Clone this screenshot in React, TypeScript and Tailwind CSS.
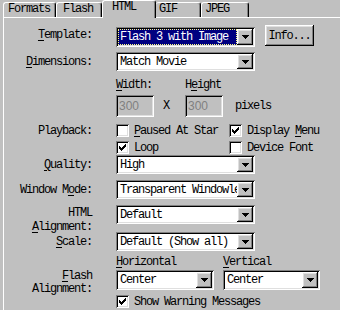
import React from 'react';

const sunken =
  'shadow-[inset_1px_1px_0_#808080,inset_-1px_-1px_0_#ffffff,inset_2px_2px_0_#000000,inset_-2px_-2px_0_#dfdfdf]';
const raised =
  'shadow-[inset_-1px_-1px_0_#000000,inset_1px_1px_0_#ffffff,inset_-2px_-2px_0_#808080,inset_2px_2px_0_#dfdfdf]';

const U = ({ children }: { children: React.ReactNode }) => (
  <span className="underline underline-offset-[2px] decoration-1">{children}</span>
);

const Arrow = () => (
  <svg width="7" height="4" viewBox="0 0 7 4" shapeRendering="crispEdges">
    <path d="M0 0h7v1h-1v1h-1v1h-1v1h-1v-1h-1v-1h-1v-1h-1z" fill="#000" />
  </svg>
);

interface ComboProps {
  value: string;
  w: string;
  h?: string;
  focused?: boolean;
}

const Combo = ({ value, w, h = 'h-[19px]', focused }: ComboProps) => (
  <div className={`${w} ${h} bg-white ${sunken} flex p-[2px] shrink-0`}>
    <div className="flex-1 min-w-0 overflow-hidden whitespace-nowrap flex items-stretch">
      {focused ? (
        <div className="flex-1 bg-[#000080] text-white border border-dotted border-[#ffff80] flex items-center pl-[1px]">
          {value}
        </div>
      ) : (
        <div className="flex items-center pl-[2px]">{value}</div>
      )}
    </div>
    <div className={`w-[16px] shrink-0 bg-[#c0c0c0] ${raised} flex items-center justify-center`}>
      <Arrow />
    </div>
  </div>
);

const Check = ({ checked }: { checked?: boolean }) => (
  <div className={`w-[13px] h-[13px] shrink-0 bg-white ${sunken} flex items-center justify-center`}>
    {checked && (
      <svg width="7" height="7" viewBox="0 0 7 7" shapeRendering="crispEdges">
        <path
          d="M0 2h1v3h-1zM1 3h1v3h-1zM2 4h1v3h-1zM3 3h1v3h-1zM4 2h1v3h-1zM5 1h1v3h-1zM6 0h1v3h-1z"
          fill="#000"
        />
      </svg>
    )}
  </div>
);

const Label = ({ children }: { children: React.ReactNode }) => (
  <div className="w-[88px] shrink-0 text-right whitespace-nowrap mr-[24px]">{children}</div>
);

const NumBox = ({ value }: { value: string }) => (
  <div
    className={`w-[38px] h-[22px] shrink-0 bg-[#c0c0c0] ${sunken} flex items-center pl-[3px] font-['Liberation_Sans',sans-serif] text-[12px] tracking-normal text-[#808080]`}
  >
    {value}
  </div>
);

export default function App() {
  return (
    <div className="w-[340px] h-[310px] overflow-hidden bg-[#c0c0c0] text-black font-['Liberation_Mono',monospace] text-[12px] tracking-[-1.2px] leading-[12px] flex flex-col">
      {/* tabs */}
      <div className="h-[17px] flex items-end shrink-0 pl-[3px]">
        <div className="w-[53px] h-[15px] border-t border-l border-white border-r border-r-black shadow-[inset_-1px_0_0_#808080] rounded-t-[3px] pl-[4px]">
          Formats
        </div>
        <div className="w-[46px] h-[15px] border-t border-l border-white border-r border-r-black shadow-[inset_-1px_0_0_#808080] rounded-t-[3px] pl-[6px]">
          Flash
        </div>
        <div className="relative z-10 w-[54px] h-[18px] -mb-px bg-[#c0c0c0] border-t border-l border-white border-r border-r-black shadow-[inset_-1px_0_0_#808080] rounded-t-[3px] pl-[9px]">
          HTML
        </div>
        <div className="w-[45px] h-[15px] border-t border-white border-r border-r-black shadow-[inset_-1px_0_0_#808080] rounded-t-[3px] pl-[3px]">
          GIF
        </div>
        <div className="w-[48px] h-[15px] border-t border-l border-white border-r border-r-black shadow-[inset_-1px_0_0_#808080] rounded-t-[3px] pl-[3px]">
          JPEG
        </div>
      </div>

      {/* panel */}
      <div className="flex-1 ml-[3px] border-t border-l border-white flex flex-col">
        {/* Template */}
        <div className="mt-[7px] h-[22px] flex items-start">
          <div className="mt-[4px]">
            <Label>
              <U>T</U>emplate:
            </Label>
          </div>
          <div className="mt-[2px]">
            <Combo value="Flash 3 with Image" w="w-[139px]" h="h-[20px]" focused />
          </div>
          <button
            className={`ml-[10px] w-[49px] h-[21px] bg-[#c0c0c0] ${raised} flex items-center justify-center`}
          >
            Info...
          </button>
        </div>

        {/* Dimensions */}
        <div className="mt-[5px] h-[19px] flex items-center">
          <Label>
            <U>D</U>imensions:
          </Label>
          <Combo value="Match Movie" w="w-[139px]" />
        </div>

        {/* Width / Height labels */}
        <div className="mt-[8px] h-[12px] flex items-center pl-[112px]">
          <div className="w-[69px]">
            <U>W</U>idth:
          </div>
          <div>
            H<U>e</U>ight
          </div>
        </div>

        {/* inputs */}
        <div className="mt-[4px] h-[22px] flex items-center pl-[112px]">
          <NumBox value="300" />
          <div className="w-[31px] pl-[9px]">X</div>
          <NumBox value="300" />
          <div className="ml-[12px]">pixels</div>
        </div>

        {/* Playback */}
        <div className="mt-[7px] h-[13px] flex items-center">
          <Label>Playback:</Label>
          <Check />
          <div className="ml-[5px] w-[85px] overflow-hidden whitespace-nowrap">
            <U>P</U>aused At Start
          </div>
          <div className="ml-[10px]">
            <Check checked />
          </div>
          <div className="ml-[5px] whitespace-nowrap">
            Display <U>M</U>enu
          </div>
        </div>

        {/* Loop */}
        <div className="mt-[4px] h-[13px] flex items-center pl-[112px]">
          <Check checked />
          <div className="ml-[5px] w-[85px]">Loop</div>
          <div className="ml-[10px]">
            <Check />
          </div>
          <div className="ml-[5px] whitespace-nowrap">Device Font</div>
        </div>

        {/* Quality */}
        <div className="mt-[1px] h-[19px] flex items-center">
          <Label>
            <U>Q</U>uality:
          </Label>
          <Combo value="High" w="w-[139px]" />
        </div>

        {/* Window Mode */}
        <div className="mt-[6px] h-[19px] flex items-center">
          <Label>
            Window M<U>o</U>de:
          </Label>
          <Combo value="Transparent Windowless" w="w-[139px]" />
        </div>

        {/* HTML Alignment */}
        <div className="mt-[6px] h-[19px] flex items-start">
          <div className="mt-[1px] leading-[14px]">
            <Label>
              HTML
              <br />
              <U>A</U>lignment:
            </Label>
          </div>
          <Combo value="Default" w="w-[139px]" />
        </div>

        {/* Scale */}
        <div className="mt-[8px] h-[19px] flex items-center">
          <Label>
            <U>S</U>cale:
          </Label>
          <Combo value="Default (Show all)" w="w-[139px]" />
        </div>

        {/* Horizontal / Vertical */}
        <div className="mt-[5px] h-[12px] flex items-center pl-[112px]">
          <div className="w-[107px]">
            <U>H</U>orizontal
          </div>
          <div>
            <U>V</U>ertical
          </div>
        </div>

        {/* Flash Alignment */}
        <div className="mt-[2px] h-[20px] flex items-start">
          <div className="leading-[13px]">
            <Label>
              <U>F</U>lash
              <br />
              Alignment:
            </Label>
          </div>
          <Combo value="Center" w="w-[98px]" h="h-[20px]" />
          <div className="ml-[9px]">
            <Combo value="Center" w="w-[97px]" h="h-[20px]" />
          </div>
        </div>

        {/* Show Warning */}
        <div className="mt-[5px] h-[13px] flex items-center pl-[112px]">
          <Check checked />
          <div className="ml-[5px] whitespace-nowrap">Show Warning Messages</div>
        </div>
      </div>
    </div>
  );
}
